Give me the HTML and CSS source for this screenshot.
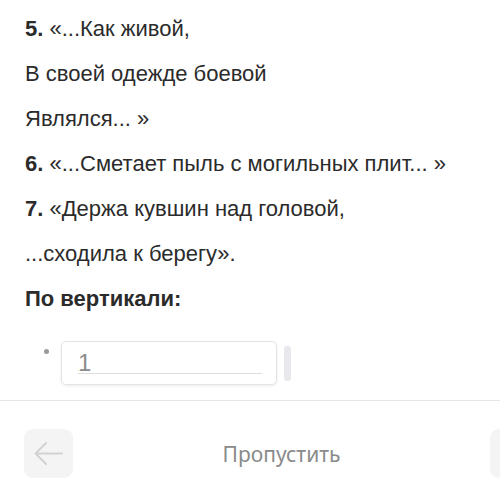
FILE: index.html
```html
<!DOCTYPE html>
<html lang="ru">
<head>
    <meta charset="UTF-8">
    <meta name="viewport" content="width=device-width, initial-scale=1.0">
    <title>Кроссворд</title>
    <link rel="stylesheet" href="styles.css">
</head>
<body>
    <main class="task">
        <p class="line"><b>5.</b> «...Как живой,</p>
        <p class="line">В своей одежде боевой</p>
        <p class="line">Являлся... »</p>
        <p class="line"><b>6.</b> «...Сметает пыль с могильных плит... »</p>
        <p class="line"><b>7.</b> «Держа кувшин над головой,</p>
        <p class="line">...сходила к берегу».</p>
        <h3 class="section">По вертикали:</h3>

        <div class="answer-row">
            <span class="dot"></span>
            <div class="field">
                <span class="field-value">1</span>
            </div>
            <span class="handle"></span>
        </div>
    </main>

    <footer class="nav">
        <button class="nav-btn back" aria-label="Назад">
            <svg width="49" height="49" viewBox="0 0 49 49">
                <path d="M38 24.5H11.5M22 14 11.5 24.5 22 35" fill="none" stroke="#d2d2d2" stroke-width="2" stroke-linecap="round" stroke-linejoin="round"/>
            </svg>
        </button>
        <span class="skip">Пропустить</span>
        <button class="nav-btn next" aria-label="Далее"></button>
    </footer>
</body>
</html>
```

FILE: styles.css
```css
html, body {
    margin: 0;
    height: 500px;
    overflow: hidden;
    background: #ffffff;
}

body {
    font-family: 'Liberation Sans', Arial, sans-serif;
    color: #2b2b2b;
}

/* Task text */
.task {
    padding: 6px 0 0 25px;
    height: 394px;
}

.line {
    margin: 0;
    font-size: 22px;
    line-height: 45px;
}

.section {
    margin: 0;
    font-size: 22px;
    line-height: 45px;
    font-weight: 700;
}

/* Answer input */
.answer-row {
    display: flex;
    align-items: flex-start;
    margin: 20px 0 0 19px;
}

.dot {
    width: 5px;
    height: 5px;
    border-radius: 50%;
    background: #9a9a9a;
    margin: 8px 12px 0 0;
}

.field {
    box-sizing: border-box;
    width: 216px;
    height: 44px;
    border: 1px solid #e4e4e4;
    border-radius: 5px;
    box-shadow: 0 1px 3px rgba(0, 0, 0, 0.08);
    padding: 0 14px 0 16px;
    display: flex;
}

.field-value {
    flex: 1;
    height: 31px;
    border-bottom: 1px solid #dddddd;
    font-size: 24px;
    line-height: 41px;
    color: #8c8c8c;
}

.handle {
    width: 7px;
    height: 35px;
    margin: 5px 0 0 7px;
    border-radius: 3px;
    background: #e9e9ed;
}

/* Bottom navigation */
.nav {
    border-top: 1px solid #e6e6e6;
    display: flex;
    align-items: center;
    padding: 28px 0 0 24px;
    overflow: hidden;
}

.nav-btn {
    width: 49px;
    height: 49px;
    padding: 0;
    border: none;
    border-radius: 9px;
    background: #f4f4f4;
    flex-shrink: 0;
}

.nav-btn svg {
    display: block;
}

.next {
    margin-right: -39px;
}

.skip {
    flex: 1;
    text-align: center;
    font-family: 'Noto Sans', sans-serif;
    font-size: 21px;
    color: #8a8a8a;
}
```
